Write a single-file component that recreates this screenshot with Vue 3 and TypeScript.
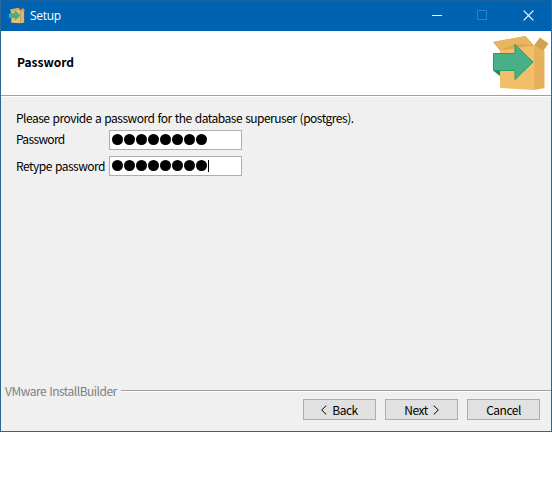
<script setup lang="ts">
import { ref } from 'vue'

interface Field {
  id: string
  label: string
  length: number
  focused: boolean
}

const fields = ref<Field[]>([
  { id: 'password', label: 'Password', length: 8, focused: false },
  { id: 'retype', label: 'Retype password', length: 8, focused: true },
])
</script>

<template>
  <main class="window">
    <header class="titlebar">
      <svg class="app-icon" viewBox="0 0 56 56">
        <path fill="#e0ad5c" d="M3 7 33 1 41 10 35 17 8 18Z" />
        <path fill="#d4a052" d="m41 11 5-9 9 5-4 12Z" />
        <path fill="#f2bd68" d="M8 15 41 10v45L8 53Z" />
        <path fill="#e5b25f" d="m41 10 12 7v36l-12 2Z" />
        <path fill="#46b085" d="M0 20h20V9l20 19-20 18V37H0Z" />
      </svg>
      <span class="title">Setup</span>
      <svg class="minimize" viewBox="0 0 10 10"><path d="M0 4.5h10" /></svg>
      <svg class="maximize" viewBox="0 0 10 10"><path d="M.5.5h9v9h-9Z" /></svg>
      <svg class="close" viewBox="0 0 11 11"><path d="m.7.7 9.6 9.6m0-9.6L.7 10.3" /></svg>
    </header>

    <section class="banner">
      <h1>Password</h1>
      <svg class="box" viewBox="0 0 58 56">
        <path fill="#dca958" d="M0 7 32.500 1 41 10.500 33 14 7 15.500Z" />
        <path fill="#f3be69" d="M7 15.500 41 10.500V55L7 53Z" />
        <path fill="#e8b660" d="M0 7 7 15.500 39 10 32.500 1Z" />
        <path fill="#d9a755" d="M7 15.500 39 10 22 9Z" />
        <path fill="#e5b15d" d="m41 10.500 10.500 5V53L41 55Z" />
        <path fill="#d39f50" d="m41 10.500 6-8 8.500 6-5 7Z" />
        <path fill="#24845f" d="M0 35.500h7V41Z" />
        <path fill="#47b087" stroke="#259f70" d="M.5 18.500h21.500V9.500L40 27 22 44.500v-9H.5Z" />
      </svg>
    </section>

    <section class="content">
      <p>Please provide a password for the database superuser (postgres).</p>
      <div v-for="field in fields" :key="field.id" class="field">
        <label :class="field.id">{{ field.label }}</label>
        <div class="input">
          <i v-for="n in field.length" :key="n" class="dot"></i>
          <b v-if="field.focused" class="caret"></b>
        </div>
      </div>
    </section>

    <footer>
      <div class="brand"><span>VMware InstallBuilder</span><hr /></div>
      <div class="actions">
        <button type="button" class="back">
          <svg viewBox="0 0 6 10"><path d="M5.300.5.7 5l4.600 4.500" /></svg><span>Back</span>
        </button>
        <button type="button" class="next">
          <span>Next</span><svg viewBox="0 0 6 10"><path d="M.7.5 5.300 5 .7 9.500" /></svg>
        </button>
        <button type="button" class="cancel"><span>Cancel</span></button>
      </div>
    </footer>
  </main>
</template>

<style>
body {
  margin: 0;
  background: #fff;
}
</style>

<style scoped>
* {
  box-sizing: border-box;
}
.window {
  width: 552px;
  height: 432px;
  display: flex;
  flex-direction: column;
  border: 1px solid #2b6791;
  border-top-color: #17629f;
  background: #f0f0f0;
  color: #000;
  font: 12px/16px "Noto Sans CJK JP", sans-serif;
  letter-spacing: -0.5px;
  word-spacing: 0.9px;
  white-space: nowrap;
}
.titlebar {
  height: 30px;
  flex: none;
  display: flex;
  align-items: center;
  background: #0063b1;
  color: #fff;
}
.app-icon {
  width: 16px;
  height: 17px;
  margin-left: 8px;
  margin-bottom: 2px;
}
.title {
  width: 60px;
  margin-left: 5px;
  font: 12px/16px "Open Sans", sans-serif;
  letter-spacing: -0.3px;
}
.minimize,
.maximize,
.close {
  fill: none;
  stroke: #fff;
}
.minimize {
  width: 10px;
  height: 10px;
  margin-left: 342px;
}
.maximize {
  width: 10px;
  height: 10px;
  margin-left: 35px;
  margin-bottom: 2px;
  stroke: #2f82c6;
}
.close {
  width: 11px;
  height: 11px;
  margin-left: 36px;
  margin-bottom: 1px;
  stroke-width: 1.2;
}
.banner {
  height: 65px;
  flex: none;
  display: flex;
  justify-content: space-between;
  background: #fff;
  border-bottom: 1px solid #a0a0a0;
  box-shadow: 0 1px #fff;
}
h1 {
  margin: 23px 0 0 16px;
  font: 700 12px/16px "Noto Sans CJK JP", sans-serif;
  letter-spacing: 0;
}
.box {
  width: 58px;
  height: 56px;
  margin-top: 4px;
}
.content {
  flex: 1;
  padding: 14px 15px 0;
}
p {
  margin: 0 0 4px;
}
.field {
  display: flex;
  height: 20px;
  margin-bottom: 6px;
}
label {
  width: 93px;
  flex: none;
}
.password {
  letter-spacing: -0.65px;
  padding-top: 1px;
}
.retype {
  padding-top: 2px;
}
.input {
  width: 133px;
  height: 20px;
  display: flex;
  align-items: flex-start;
  padding: 3px 0 0 2px;
  background: #fff;
  border: 1px solid #abadb3;
}
.dot {
  width: 11.4px;
  height: 11.4px;
  margin-right: 0.6px;
  border-radius: 50%;
  background: #000;
}
.caret {
  width: 1px;
  height: 12px;
  background: #000;
}
footer {
  height: 50px;
}
.brand {
  height: 18px;
  display: flex;
  align-items: flex-start;
  color: #808080;
}
.brand span {
  width: 116px;
  padding: 2px 0 0 4px;
}
hr {
  flex: 1;
  height: 2px;
  margin: 9px 0 0 4px;
  border: 0;
  border-top: 1px solid #a0a0a0;
  background: #fff;
}
.actions {
  display: flex;
  justify-content: flex-end;
  gap: 9px;
  padding-right: 11px;
}
button {
  width: 73px;
  height: 21px;
  display: flex;
  align-items: center;
  justify-content: center;
  gap: 5px;
  padding: 0;
  border: 1px solid #adadad;
  background: #e1e1e1;
  color: #000;
  font: inherit;
  letter-spacing: -0.5px;
}
button svg {
  width: 6px;
  height: 10px;
  fill: none;
  stroke: #000;
}
</style>
